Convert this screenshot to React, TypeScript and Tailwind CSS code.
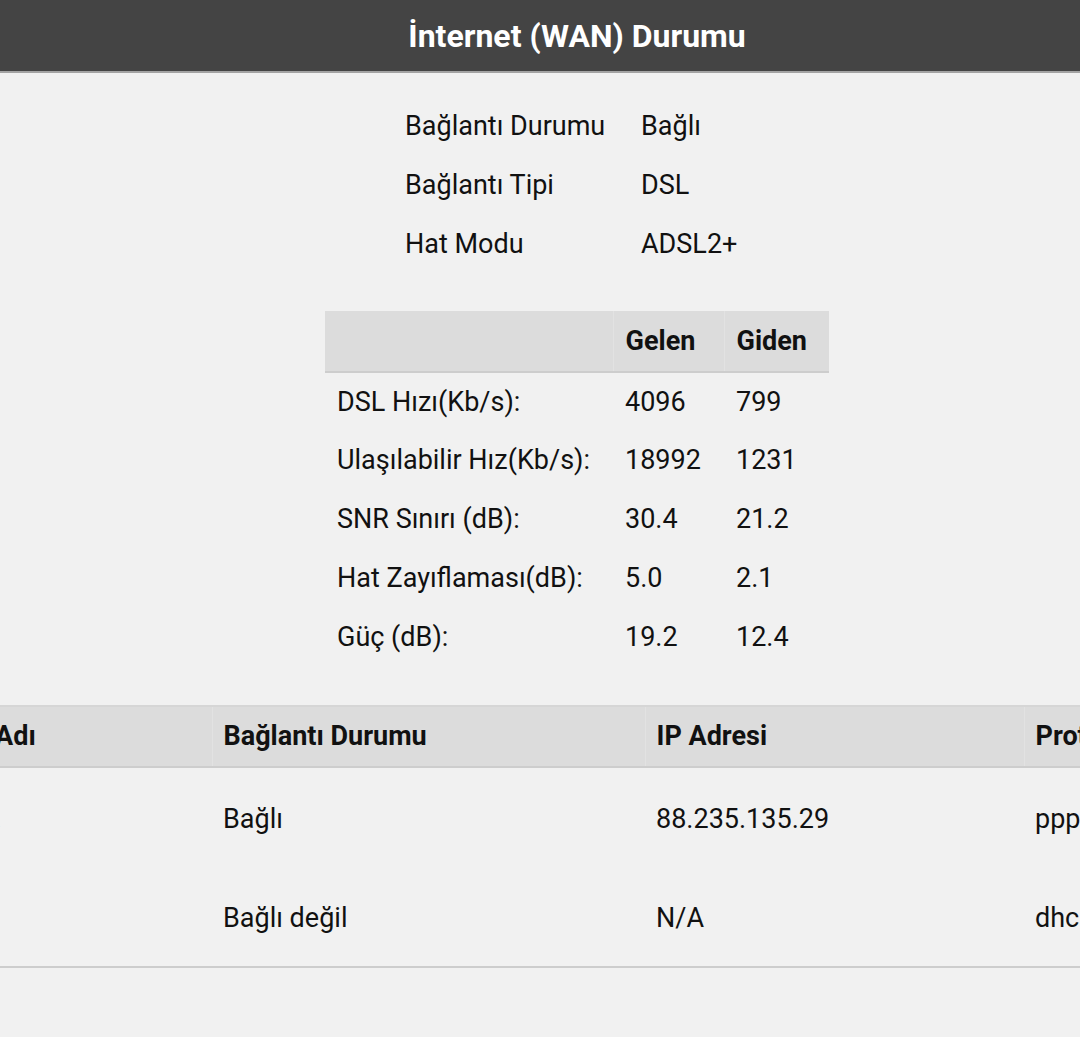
const info = [
  { label: 'Bağlantı Durumu', value: 'Bağlı' },
  { label: 'Bağlantı Tipi', value: 'DSL' },
  { label: 'Hat Modu', value: 'ADSL2+' },
];

const stats = [
  { label: 'DSL Hızı(Kb/s):', down: '4096', up: '799' },
  { label: 'Ulaşılabilir Hız(Kb/s):', down: '18992', up: '1231' },
  { label: 'SNR Sınırı (dB):', down: '30.4', up: '21.2' },
  { label: 'Hat Zayıflaması(dB):', down: '5.0', up: '2.1' },
  { label: 'Güç (dB):', down: '19.2', up: '12.4' },
];

const connections = [
  { name: 'pppoe_1.', status: 'Bağlı', ip: '88.235.135.29', proto: 'pppoe', link: true },
  { name: '', status: 'Bağlı değil', ip: 'N/A', proto: 'dhcp', link: false },
];

const App = () => {
  return (
    <div className="w-full min-h-[1052px] bg-white overflow-hidden font-['Roboto',sans-serif] text-[#111]">
      <div className="w-[1154px] bg-[#f1f1f1] pb-[69px]">
        {/* Title bar */}
        <header className="h-[73px] bg-[#444444] border-b-2 border-[#a3a3a3] flex items-center justify-center">
          <h1 className="text-white text-[32px] font-bold leading-none">İnternet (WAN) Durumu</h1>
        </header>

        {/* Connection info */}
        <table className="mx-auto mt-[24px] text-[27px] w-[366px]">
          <tbody>
            {info.map((row) => (
              <tr key={row.label} className="h-[59px]">
                <td className="w-[236px] px-[11px]">{row.label}</td>
                <td className="px-[11px]">{row.value}</td>
              </tr>
            ))}
          </tbody>
        </table>

        {/* DSL stats */}
        <table className="mx-auto mt-[37px] text-[27px] w-[504px] border-collapse">
          <thead>
            <tr className="h-[61px] bg-[#dcdcdc] border-b-2 border-[#cdcdcd]">
              <th className="w-[288px]"></th>
              <th className="w-[111px] px-[12px] text-left font-bold border-l border-[#e2e2e2]">Gelen</th>
              <th className="px-[12px] text-left font-bold border-l border-[#e2e2e2]">Giden</th>
            </tr>
          </thead>
          <tbody>
            {stats.map((row) => (
              <tr key={row.label} className="h-[59px]">
                <td className="px-[12px]">{row.label}</td>
                <td className="px-[12px]">{row.down}</td>
                <td className="px-[12px]">{row.up}</td>
              </tr>
            ))}
          </tbody>
        </table>

        {/* WAN connections */}
        <table className="ml-[-123px] mt-[38px] text-[27px] w-[1420px] border-collapse border-t-2 border-[#d6d6d6]">
          <thead>
            <tr className="h-[61px] bg-[#dcdcdc] border-b-2 border-[#cdcdcd]">
              <th className="w-[335px] px-[11px] text-left font-bold">Bağlantı Adı</th>
              <th className="w-[433px] px-[11px] text-left font-bold border-l border-[#e2e2e2]">Bağlantı Durumu</th>
              <th className="w-[379px] px-[11px] text-left font-bold border-l border-[#e2e2e2]">IP Adresi</th>
              <th className="px-[11px] text-left font-bold border-l border-[#e2e2e2]">Protokol</th>
            </tr>
          </thead>
          <tbody className="border-b-2 border-[#cdcdcd]">
            {connections.map((row, i) => (
              <tr key={i} className="h-[100px]">
                <td className="pl-[15px] pr-[11px] pt-[3px]">
                  {row.link && <a className="text-[#2a4fb0]">{row.name}</a>}
                </td>
                <td className="px-[11px] pt-[3px]">{row.status}</td>
                <td className="px-[11px] pt-[3px]">{row.ip}</td>
                <td className="px-[11px] pt-[3px]">{row.proto}</td>
              </tr>
            ))}
          </tbody>
        </table>
      </div>
    </div>
  );
};

export default App;
